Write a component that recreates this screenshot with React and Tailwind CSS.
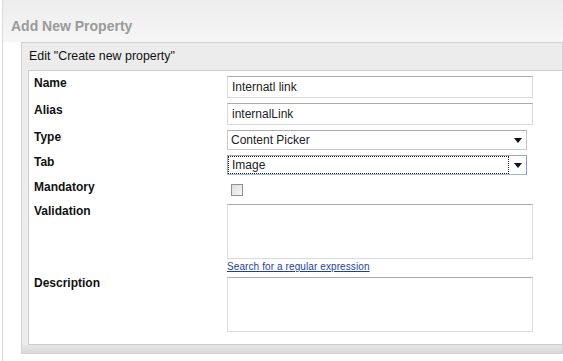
const font = { fontFamily: '"Liberation Sans", Arial, sans-serif' };

const Arrow = () => (
    <svg width="8" height="5" viewBox="0 0 8 5" className="shrink-0">
        <path d="M0 0 H8 L4 5 Z" fill="#111" />
    </svg>
);

const TextBox = ({ value }) => (
    <div className="w-[306px] h-[22px] border border-[#d9d9d9] border-t-[#ababab] bg-white flex items-center pl-[4px] text-[12px] text-[#222]">
        {value}
    </div>
);

const SelectBox = ({ value, focused }) => (
    <div
        className={`w-[300px] h-[20px] border bg-white flex items-center ${
            focused ? 'border-[#a8a8a8] border-r-[#7d9fcf] border-b-[#9fb6da]' : 'border-[#c9c9c9] border-t-[#adadad]'
        }`}
    >
        <div
            className={`flex-1 h-full flex items-center pl-[3px] text-[12px] text-[#222] ${
                focused ? 'border border-dotted border-[#222]' : ''
            }`}
        >
            {value}
        </div>
        <div className="w-[17px] h-full flex items-center justify-center">
            <Arrow />
        </div>
    </div>
);

const Area = () => (
    <div className="w-[306px] h-[55px] border border-[#dcdcdc] border-t-[#a9a9a9] bg-white" />
);

const Label = ({ children }) => (
    <div className="w-[193px] shrink-0 text-[12px] font-bold text-[#111] leading-[15px]">{children}</div>
);

export default function App() {
    return (
        <div className="w-[563px] h-[361px] overflow-hidden bg-white" style={font}>
            <div className="h-full ml-[2px] border-l border-[#dadada]">
                <div className="h-[42px] bg-gradient-to-b from-[#ededed] to-[#f6f6f7] pl-[8px] pt-[18px]">
                    <div className="text-[14px] font-bold text-[#9a9a9a] leading-[17px]">Add New Property</div>
                </div>
                <div className="ml-[18px] border border-[#d2d2d2] bg-[#ececec]">
                    <div className="h-[27px] flex items-center pl-[7px] text-[12.4px] text-[#111]">
                        Edit "Create new property"
                    </div>
                    <div className="ml-[6px] border border-[#cdcdcd] border-r-0 bg-white pl-[5px] pt-[5px] pb-[12px]">
                        <div className="flex">
                            <Label>Name</Label>
                            <TextBox value="Internatl link" />
                        </div>
                        <div className="flex mt-[5px]">
                            <Label>Alias</Label>
                            <TextBox value="internalLink" />
                        </div>
                        <div className="flex mt-[5px]">
                            <Label>Type</Label>
                            <SelectBox value="Content Picker" />
                        </div>
                        <div className="flex mt-[5px]">
                            <Label>Tab</Label>
                            <SelectBox value="Image" focused />
                        </div>
                        <div className="flex mt-[5px]">
                            <Label>Mandatory</Label>
                            <div className="pl-[4px] pt-[4px]">
                                <div className="w-[12px] h-[12px] border border-[#8f8f8f] bg-gradient-to-br from-[#dcdcdc] to-[#f7f7f7]" />
                            </div>
                        </div>
                        <div className="flex mt-[8px]">
                            <Label>Validation</Label>
                            <div className="flex flex-col">
                                <Area />
                                <a href="#" className="text-[10px] text-[#1c3fa6] underline leading-[12px] mt-[2px] tracking-[0.1px]">
                                    Search for a regular expression
                                </a>
                            </div>
                        </div>
                        <div className="flex mt-[4px]">
                            <div className="w-[193px] shrink-0 text-[12px] font-bold text-[#111] leading-[15px] -mt-[1px]">Description</div>
                            <Area />
                        </div>
                    </div>
                    <div className="h-[8px] bg-gradient-to-b from-[#e6e6e6] to-[#d9d9d9]" />
                </div>
            </div>
        </div>
    );
}
